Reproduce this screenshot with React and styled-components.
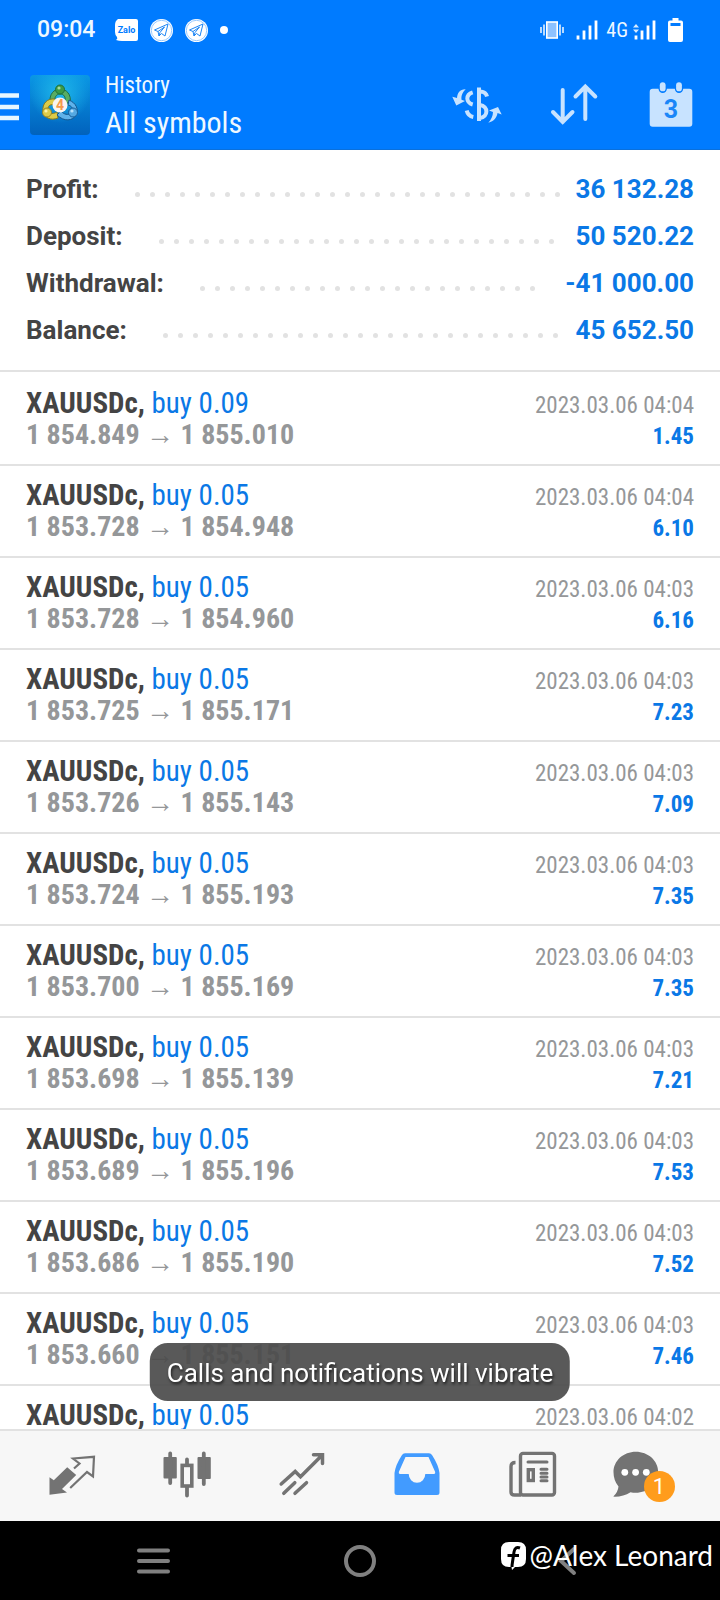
import React from "react";
import styled, { createGlobalStyle } from "styled-components";

const GlobalStyle = createGlobalStyle`
  * {
    box-sizing: border-box;
  }

  body {
    margin: 0;
    font-family: Roboto, "Liberation Sans", sans-serif;
    background-color: #fff;
  }

  button {
    margin: 0;
    padding: 0;
    border: none;
    background: none;
    cursor: pointer;
    color: inherit;
    font-family: inherit;
  }

  svg {
    display: block;
    overflow: visible;
  }
`;

const condensed = `"Roboto Condensed", Roboto, sans-serif`;

const Page = styled.div`
  display: flex;
  flex-direction: column;
  height: 100vh;
`;

const Top = styled.header`
  color: #eef8ff;
  background-color: #007bff;
  box-shadow: inset 0 -1px #0a70dc;
`;

const StatusBar = styled.div`
  display: flex;
  align-items: center;
  justify-content: space-between;
  height: 60px;
  padding: 0 37px;
`;

const StatusGroup = styled.div`
  display: flex;
  align-items: center;
  gap: 12px;
`;

const Clock = styled.time`
  margin-right: 8px;
  font-size: 23px;
  font-weight: 500;
  line-height: 28px;
`;

const Network = styled.span`
  margin: 0 -6px 0 -4px;
  font-family: ${condensed};
  font-size: 20px;
  line-height: 24px;
`;

const AppBar = styled.div`
  display: flex;
  align-items: center;
  height: 90px;
  padding-right: 19px;
`;

const MenuButton = styled.button`
  width: 19px;
  margin-right: 11px;
  padding-top: 3px;
`;

const Titles = styled.div`
  flex: 1;
  margin-left: 15px;
  font-family: ${condensed};
`;

const Subtitle = styled.div`
  font-size: 23px;
  line-height: 36px;
`;

const Title = styled.h1`
  margin: 0;
  font-size: 30px;
  font-weight: 400;
  line-height: 38px;
`;

const Actions = styled.div`
  display: flex;
  gap: 37px;
  color: #c8e3ff;
`;

const Summary = styled.dl`
  margin: 0;
  padding: 15px 26px 17px;
  border-bottom: 2px solid #e2e2e2;
`;

const SummaryRow = styled.div`
  display: flex;
  align-items: center;
  height: 47px;
  font-size: 26px;
  font-weight: 700;
  line-height: 32px;
`;

const SummaryLabel = styled.dt`
  color: #444;
`;

const Leader = styled.span`
  display: flex;
  flex: 1;
  flex-wrap: wrap;
  gap: 10px;
  height: 5px;
  margin: 12px 16px 0 36px;
  overflow: hidden;
`;

const Dot = styled.i`
  width: 5px;
  height: 5px;
  border-radius: 50%;
  background-color: #e2e2e2;
`;

const SummaryValue = styled.dd`
  margin: 0;
  color: #0a78e6;
`;

const Deals = styled.ul`
  flex: 1;
  min-height: 0;
  margin: 0;
  padding: 2px 0 0;
  overflow-y: auto;
  scrollbar-width: none;
  list-style: none;
`;

const Deal = styled.li`
  padding: 13px 26px;
  border-bottom: 2px solid #e2e2e2;
  font-family: ${condensed};
`;

const DealLine = styled.div`
  display: flex;
  align-items: baseline;
  justify-content: space-between;
  height: 32px;
  line-height: 32px;
`;

const Order = styled.span`
  font-size: 29px;
`;

const Symbol = styled.strong`
  color: #444;
  font-weight: 700;
`;

const Side = styled.span`
  color: #0a78e6;
`;

const Prices = styled.span`
  color: #959799;
  font-size: 28px;
  font-weight: 700;
`;

const Arrow = styled.span`
  font-family: "Liberation Sans", sans-serif;
  font-weight: 400;
`;

const DealTime = styled.time`
  color: #959799;
  font-size: 23px;
`;

const DealProfit = styled.span`
  color: #0a78e6;
  font-size: 23px;
  font-weight: 700;
`;

const TabBar = styled.nav`
  display: flex;
  height: 92px;
  padding: 0 16px 0 14px;
  border-top: 2px solid #e2e2e2;
  background-color: #f7f7f7;
`;

const Tab = styled.button`
  position: relative;
  display: flex;
  flex: 1;
  align-items: center;
  justify-content: center;
  color: ${(props) => (props.$active ? "#429bff" : "#737373")};
`;

const Badge = styled.span`
  position: absolute;
  top: 40px;
  left: calc(50% - 3px);
  width: 31px;
  border-radius: 50%;
  color: #fff;
  background-color: #ff9c1c;
  font-size: 22px;
  line-height: 31px;
  text-align: center;
`;

const SystemNav = styled.nav`
  position: relative;
  display: flex;
  height: 79px;
  padding: 0 50px;
  background-color: #000;
`;

const SystemButton = styled.button`
  display: flex;
  flex: 1;
  align-items: center;
  justify-content: center;
  color: #808080;
`;

const Watermark = styled.div`
  position: absolute;
  top: 18px;
  right: 7px;
  display: flex;
  align-items: center;
  gap: 3px;
  color: #fff;
  font-family: Lato, sans-serif;
  font-size: 28px;
  line-height: 32px;
`;

const Toast = styled.div`
  position: fixed;
  bottom: 199px;
  left: 50%;
  transform: translateX(-50%);
  padding: 15px 17px 13px;
  border-radius: 18px;
  color: #fff;
  background-color: rgba(75, 75, 75, 0.92);
  font-size: 26px;
  line-height: 30px;
  text-shadow: 1px 2px 3px rgba(0, 0, 0, 0.7);
  white-space: nowrap;
`;

const ZaloIcon = () => (
  <svg width="23" height="23" viewBox="0 0 23 23">
    <path
      d="M3 0H21Q23 0 23 2V20Q23 22 21 22H7Q4 22 1 21Q3 20 2 18Q0 16 0 13V6Q0 2 3 0Z"
      fill="#fff"
    />
    <text x="11.5" y="14" fontSize="9" fontWeight="700" textAnchor="middle" fill="#007bff">
      Zalo
    </text>
  </svg>
);

const TelegramIcon = () => (
  <svg width="23" height="23" viewBox="0 0 23 23">
    <circle cx="11.5" cy="11.5" r="11.5" fill="#fff" />
    <circle cx="11.5" cy="11.5" r="10.2" fill="none" stroke="#6db3ff" strokeWidth="0.7" />
    <path
      d="M4.5 11L18 5L15 17L11.5 14.5L9 17L8 12.5ZM8 12.5L14.5 8L10 13.5L9 17"
      fill="none"
      stroke="#1b85f5"
      strokeWidth="1"
      strokeLinejoin="round"
    />
  </svg>
);

const VibrateIcon = () => (
  <svg width="24" height="18" viewBox="0 0 24 18">
    <rect x="6.8" y="1" width="10.4" height="16" fill="#8cc1ff" stroke="#fff" strokeWidth="1.6" />
    <path d="M1 6V12M4 3.5V14.5M20 3.5V14.5M23 6V12" stroke="#e4f2ff" strokeWidth="1.6" />
  </svg>
);

const SignalIcon = ({ data }) => (
  <svg width="22" height="20" viewBox="0 0 22 20">
    <path
      d="M2 15.5V19.5M8 10.5V19.5M14 5.5V19.5M20 0.5V19.5"
      fill="none"
      stroke="#fff"
      strokeWidth="2.8"
    />
    {data && <path d="M-1 7.5L2 4L5 7.5ZM-1 9.5H5L2 13Z" fill="#d8ecff" />}
  </svg>
);

const BatteryIcon = () => (
  <svg width="15" height="24" viewBox="0 0 15 24">
    <path
      d="M4.5 0H10.5V2.5H13Q15 2.5 15 4.5V22Q15 24 13 24H2Q0 24 0 22V4.5Q0 2.5 2 2.5H4.5ZM2.5 5V8H12.5V5Z"
      fill="#fff"
      fillRule="evenodd"
    />
  </svg>
);

const LogoIcon = () => (
  <svg width="60" height="60" viewBox="0 0 60 60">
    <defs>
      <linearGradient id="logoBack" x1="0" y1="0" x2="0" y2="1">
        <stop offset="0" stopColor="#0a97e4" />
        <stop offset="1" stopColor="#0162bd" />
      </linearGradient>
      <radialGradient id="logoGlow" cx="0.5" cy="0.3" r="0.5">
        <stop offset="0" stopColor="#1fb8ea" />
        <stop offset="1" stopColor="#1fb8ea" stopOpacity="0" />
      </radialGradient>
    </defs>
    <rect width="60" height="60" rx="4" fill="url(#logoBack)" />
    <rect width="60" height="60" rx="4" fill="url(#logoGlow)" />
    <path
      d="M20 28C19 19 24 14 30 14S42 19 40 29L35 27C36 22 34 19 30 19S24 23 25 27Z"
      fill="#58ad63"
      stroke="#1f6f45"
      strokeWidth="1"
    />
    <path
      d="M25 24C17 23 12 29 13 36S21 46 28 43L27 37C22 40 18 38 18 34S21 29 25 30Z"
      fill="#dccb48"
      stroke="#85791f"
      strokeWidth="1"
    />
    <path
      d="M39 25C46 28 49 34 46 40S34 47 27 40L31 36C35 41 41 40 42 36S41 31 38 30Z"
      fill="#5fb2ea"
      stroke="#14568f"
      strokeWidth="1"
    />
    <circle cx="30" cy="14.5" r="4.5" fill="#3c9a45" stroke="#206f3c" />
    <circle cx="17" cy="37.5" r="4.5" fill="#ddcc4b" stroke="#968426" />
    <circle cx="43" cy="37.5" r="4.5" fill="#55a9e2" stroke="#175d9a" />
    <circle cx="29" cy="13" r="1.6" fill="#a5dc9b" />
    <circle cx="16" cy="36" r="1.6" fill="#fbf3a8" />
    <circle cx="42" cy="36" r="1.6" fill="#b9e2fb" />
    <circle cx="30" cy="30" r="7.5" fill="#f8f5f2" />
    <text x="30" y="35" fontSize="14" fontWeight="700" textAnchor="middle" fill="#f49a4c">
      4
    </text>
  </svg>
);

const CurrencyIcon = () => (
  <svg width="60" height="60" viewBox="0 0 60 60">
    <path
      d="M32 12.5V46M25.7 17.3Q20.3 19 20.3 23.5Q20.5 28 25.7 29.5M19.7 35.5Q21 41 26.3 42M33.7 16.5Q39 17 40 21.5M33 30C41.5 31 41.5 42 33 43"
      fill="none"
      stroke="currentColor"
      strokeWidth="4"
    />
    <path
      d="M18.7 14.3C13 14 10.5 18 10 23L5.3 21.7L9.3 30.5L18 26L14.5 24.8C14 20 16 17 18.7 14.3ZM41.3 47.7C47 46.5 50 42 50.5 38L54.7 39.5L51 32L42 35.5L46 37C46 41 44 45 41.3 47.7Z"
      fill="currentColor"
    />
  </svg>
);

const SortIcon = () => (
  <svg width="60" height="60" viewBox="0 0 60 60">
    <path
      d="M18.7 15V47M9 37L18.7 47L28.5 37M41.3 44V12M31.5 21.5L41.3 11.5L51.3 21.5"
      fill="none"
      stroke="currentColor"
      strokeWidth="4"
      strokeLinecap="round"
    />
  </svg>
);

const CalendarIcon = () => (
  <svg width="60" height="60" viewBox="0 0 60 60">
    <rect x="8.7" y="13.7" width="42.6" height="38" rx="3" fill="currentColor" />
    <rect x="17.5" y="6" width="8.4" height="12" rx="4.2" fill="#007bff" />
    <rect x="33.8" y="6" width="8.4" height="12" rx="4.2" fill="#007bff" />
    <rect x="18.8" y="7.3" width="5.8" height="9" rx="2.9" fill="currentColor" />
    <rect x="35.1" y="7.3" width="5.8" height="9" rx="2.9" fill="currentColor" />
    <text x="30" y="43" fontSize="25" fontWeight="700" textAnchor="middle" fill="#1a86f8">
      3
    </text>
  </svg>
);

const QuotesIcon = () => (
  <svg width="60" height="60" viewBox="0 0 60 60">
    <path
      d="M7.5 48.7V31.3L11.8 34.3L25.2 21.3L34.2 29L20 43L25 46.5Z"
      fill="currentColor"
    />
    <path
      d="M32 22.5L37.5 17.5L31 12.5L52 10.8L51 30.5L45 26L28.2 42"
      fill="none"
      stroke="currentColor"
      strokeWidth="2.2"
    />
  </svg>
);

const ChartsIcon = () => (
  <svg width="60" height="60" viewBox="0 0 60 60">
    <rect x="6.5" y="11" width="13.3" height="21.5" rx="1" fill="currentColor" />
    <rect x="40.5" y="11" width="13.3" height="22" rx="1" fill="currentColor" />
    <rect
      x="25.2"
      y="19.4"
      width="9.6"
      height="20.6"
      fill="none"
      stroke="currentColor"
      strokeWidth="3.6"
    />
    <path
      d="M13.2 7.5V37M46.8 7.5V38M30 13.5V19M30 41V49.5"
      stroke="currentColor"
      strokeWidth="3.8"
      strokeLinecap="round"
    />
  </svg>
);

const TradeIcon = () => (
  <svg width="60" height="60" viewBox="0 0 60 60">
    <path
      d="M9.2 38L23.2 25.5L28.5 30.7L50.3 9M41.5 8.7H50.5V17.5M22.8 36.7L11.8 47.3M34.5 36.7L23 47.3"
      fill="none"
      stroke="currentColor"
      strokeWidth="3.5"
      strokeLinecap="round"
    />
  </svg>
);

const HistoryIcon = () => (
  <svg width="60" height="60" viewBox="0 0 60 60">
    <path
      d="M18 7.3H42Q44 7.3 45 9Q51.5 19 52.5 27V46.5Q52.5 49 50 49H10Q7.5 49 7.5 46.5V27Q8.5 19 15 9Q16 7.3 18 7.3ZM18.5 11L11.8 26Q11.5 28 13 28H21.7A8.3 8.7 0 0 0 38.3 28H47Q48.5 28 48.2 26L41.5 11Z"
      fill="currentColor"
      fillRule="evenodd"
    />
  </svg>
);

const NewsIcon = () => (
  <svg width="60" height="60" viewBox="0 0 60 60">
    <g fill="none" stroke="currentColor" strokeWidth="3.4">
      <rect x="18.5" y="7.4" width="34" height="41.6" rx="2.5" />
      <path d="M13.5 16.5Q9 16.5 9 20.5V46Q9 49 12.5 49H19" />
      <rect x="26.3" y="23.7" width="5" height="10.8" />
      <path
        d="M26 16H45M39 23.3H45M39 27.3H45M39 31H45M39 34.8H45"
        strokeWidth="3"
        strokeLinecap="round"
      />
    </g>
  </svg>
);

const ChatIcon = () => (
  <svg width="60" height="60" viewBox="0 0 60 60">
    <path
      d="M18.8 5.7C31 5.7 41.2 14.5 41.2 26.3S31 46.8 18.8 46.8Q16 46.8 13.5 46.2Q6 51 -3.7 50.6Q1 46 1.5 40.5Q-3.5 34.5 -3.5 26.3C-3.5 14.5 6.5 5.7 18.8 5.7Z"
      fill="currentColor"
    />
    <circle cx="7.8" cy="26.3" r="3.4" fill="#fff" />
    <circle cx="18.6" cy="26.3" r="3.4" fill="#fff" />
    <circle cx="29.3" cy="26.3" r="3.4" fill="#fff" />
  </svg>
);

const FacebookIcon = () => (
  <svg width="25" height="26" viewBox="0 0 25 26">
    <path
      d="M8 0H17Q25 0 25 8V17Q25 25 17 25H14L11 28L10.500 25H8Q0 25 0 17V8Q0 0 8 0Z"
      fill="#fff"
    />
    <path
      d="M19 6Q14 4 13 10L11.5 20Q11 23 11 25M6.5 13.5H18"
      fill="none"
      stroke="#000"
      strokeWidth="3"
    />
  </svg>
);

const summary = [
  { label: "Profit:", value: "36 132.28" },
  { label: "Deposit:", value: "50 520.22" },
  { label: "Withdrawal:", value: "-41 000.00" },
  { label: "Balance:", value: "45 652.50" },
];

const deals = [
  { volume: "0.09", open: "1 854.849", close: "1 855.010", time: "04:04", profit: "1.45" },
  { volume: "0.05", open: "1 853.728", close: "1 854.948", time: "04:04", profit: "6.10" },
  { volume: "0.05", open: "1 853.728", close: "1 854.960", time: "04:03", profit: "6.16" },
  { volume: "0.05", open: "1 853.725", close: "1 855.171", time: "04:03", profit: "7.23" },
  { volume: "0.05", open: "1 853.726", close: "1 855.143", time: "04:03", profit: "7.09" },
  { volume: "0.05", open: "1 853.724", close: "1 855.193", time: "04:03", profit: "7.35" },
  { volume: "0.05", open: "1 853.700", close: "1 855.169", time: "04:03", profit: "7.35" },
  { volume: "0.05", open: "1 853.698", close: "1 855.139", time: "04:03", profit: "7.21" },
  { volume: "0.05", open: "1 853.689", close: "1 855.196", time: "04:03", profit: "7.53" },
  { volume: "0.05", open: "1 853.686", close: "1 855.190", time: "04:03", profit: "7.52" },
  { volume: "0.05", open: "1 853.660", close: "1 855.151", time: "04:03", profit: "7.46" },
  { volume: "0.05", time: "04:02" },
];

const tabs = [
  { name: "Quotes", icon: <QuotesIcon /> },
  { name: "Charts", icon: <ChartsIcon /> },
  { name: "Trade", icon: <TradeIcon /> },
  { name: "History", icon: <HistoryIcon />, active: true },
  { name: "News", icon: <NewsIcon /> },
  { name: "Messages", icon: <ChatIcon />, badge: 1 },
];

const App = () => {
  return (
    <Page>
      <GlobalStyle />
      <Top>
        <StatusBar>
          <StatusGroup>
            <Clock>09:04</Clock>
            <ZaloIcon />
            <TelegramIcon />
            <TelegramIcon />
            <svg width="8" height="8" viewBox="0 0 8 8">
              <circle cx="4" cy="4" r="4" fill="#fff" />
            </svg>
          </StatusGroup>
          <StatusGroup>
            <VibrateIcon />
            <SignalIcon />
            <Network>4G</Network>
            <SignalIcon data />
            <BatteryIcon />
          </StatusGroup>
        </StatusBar>
        <AppBar>
          <MenuButton aria-label="Menu">
            <svg width="19" height="28" viewBox="0 0 19 28">
              <path d="M0 2.5H19M0 14H19M0 25H19" stroke="#e6f6ff" strokeWidth="4.6" />
            </svg>
          </MenuButton>
          <LogoIcon />
          <Titles>
            <Subtitle>History</Subtitle>
            <Title>All symbols</Title>
          </Titles>
          <Actions>
            <button aria-label="Symbols">
              <CurrencyIcon />
            </button>
            <button aria-label="Sort">
              <SortIcon />
            </button>
            <button aria-label="Period">
              <CalendarIcon />
            </button>
          </Actions>
        </AppBar>
      </Top>

      <Summary>
        {summary.map(({ label, value }) => (
          <SummaryRow key={label}>
            <SummaryLabel>{label}</SummaryLabel>
            <Leader>
              {[...Array(60)].map((_, index) => (
                <Dot key={index} />
              ))}
            </Leader>
            <SummaryValue>{value}</SummaryValue>
          </SummaryRow>
        ))}
      </Summary>

      <Deals>
        {deals.map((deal, index) => (
          <Deal key={index}>
            <DealLine>
              <Order>
                <Symbol>XAUUSDc,</Symbol> <Side>buy {deal.volume}</Side>
              </Order>
              <DealTime>2023.03.06 {deal.time}</DealTime>
            </DealLine>
            {deal.open && (
              <DealLine>
                <Prices>
                  {deal.open} <Arrow>→</Arrow> {deal.close}
                </Prices>
                <DealProfit>{deal.profit}</DealProfit>
              </DealLine>
            )}
          </Deal>
        ))}
      </Deals>

      <TabBar>
        {tabs.map(({ name, icon, active, badge }) => (
          <Tab key={name} aria-label={name} $active={active}>
            {icon}
            {badge && <Badge>{badge}</Badge>}
          </Tab>
        ))}
      </TabBar>

      <SystemNav>
        <SystemButton aria-label="Recent apps">
          <svg width="33" height="26" viewBox="0 0 33 26">
            <path
              d="M2 2.5H31M2 13H31M2 23.5H31"
              stroke="currentColor"
              strokeWidth="4"
              strokeLinecap="round"
            />
          </svg>
        </SystemButton>
        <SystemButton aria-label="Home">
          <svg width="32" height="32" viewBox="0 0 32 32">
            <circle cx="16" cy="16" r="14" fill="none" stroke="currentColor" strokeWidth="4" />
          </svg>
        </SystemButton>
        <SystemButton aria-label="Back">
          <svg width="18" height="28" viewBox="0 0 18 28">
            <path
              d="M16 2L3 14L16 26"
              fill="none"
              stroke="currentColor"
              strokeWidth="4"
              strokeLinecap="round"
            />
          </svg>
        </SystemButton>
        <Watermark>
          <FacebookIcon />
          @Alex Leonard
        </Watermark>
      </SystemNav>

      <Toast role="status">Calls and notifications will vibrate</Toast>
    </Page>
  );
};

export default App;
